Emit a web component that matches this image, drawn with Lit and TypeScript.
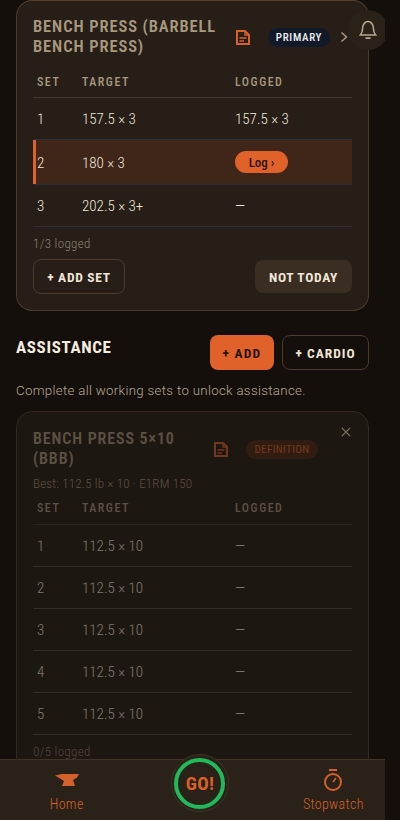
import { LitElement, html, css } from "lit";
import { customElement } from "lit/decorators.js";

const noteIcon = html`<svg class="note" viewBox="0 0 14 15" width="14" height="15" fill="none" stroke="currentColor" stroke-width="2">
  <path d="M1 1h8l4 4v9H1z" /><path d="M3.500 8h7M3.500 11h4.500" stroke-width="1.600" /><path d="M9 1v4h4" stroke-width="1.400" />
</svg>`;

type Row = { n: string; t: string; l: string; cur?: boolean; action?: boolean };

const mainRows: Row[] = [
  { n: "1", t: "157.5 × 3", l: "157.5 × 3" },
  { n: "2", t: "180 × 3", l: "", cur: true, action: true },
  { n: "3", t: "202.5 × 3+", l: "—" },
];
const bbbRows: Row[] = ["1", "2", "3", "4", "5"].map((n) => ({ n, t: "112.5 × 10", l: "—" }));

@customElement("app-root")
export class AppRoot extends LitElement {
  static styles = css`
    :host {
      display: flex;
      width: 400px;
      height: 820px;
      overflow: hidden;
      background: #140f0a;
      font-family: "Roboto", "Liberation Sans", sans-serif;
      font-stretch: 85%;
      color: #f0e6d8;
    }
    .viewport { position: relative; width: 385px; height: 820px; overflow: hidden; flex: none; }
    .page { display: flex; flex-direction: column; padding: 0 16px; }
    .card {
      border: 1px solid #4c3c2a;
      border-radius: 16px;
      background: #261e17;
      padding: 16px;
    }
    .card.first { height: 311px; box-sizing: border-box; padding-top: 6px; border-top-color: #54422e; }
    .head { display: flex; align-items: center; height: 60px; }
    .title {
      width: 203px;
      font-size: 16.5px;
      line-height: 20px;
      font-weight: 600;
      letter-spacing: 0.9px;
      color: #a8997f;
    }
    .note { color: #d9602a; flex: none; margin-right: 1px; }
    .badge {
      margin-left: 17px;
      height: 19px;
      width: 62px;
      border-radius: 10px;
      background: #121a2a;
      color: #eef0f2;
      font-size: 11px;
      font-weight: 500;
      letter-spacing: 0.7px;
      display: flex;
      align-items: center;
      justify-content: center;
      flex: none;
    }
    .chev { margin-left: 10px; flex: none; color: #a8997f; }
    .grid-head, .row {
      display: grid;
      grid-template-columns: 49px 153px 1fr;
      align-items: center;
    }
    .grid-head {
      box-sizing: border-box;
      height: 31px;
      padding-bottom: 1px;
      font-size: 12px;
      font-weight: 500;
      letter-spacing: 1.5px;
      color: #a8997f;
      border-bottom: 1px solid #42362a;
    }
    .grid-head > span:first-child, .row > span:first-child { padding-left: 4px; }
    .row {
      height: 40px;
      padding-top: 1px;
      font-size: 15px;
      font-weight: 300;
      color: #efe7da;
      border-bottom: 1px solid #2f3037;
    }
    .row.cur {
      height: 42px;
      padding-top: 2px;
      background: #402618;
      box-shadow: inset 3px 0 0 #e0622a;
    }
    .log {
      display: flex;
      align-items: center;
      justify-content: center;
      width: 53px;
      height: 22px;
      border-radius: 11px;
      background: #e0622a;
      color: #2a1408;
      font-size: 13px;
      font-weight: 500;
      margin-top: -2px;
    }
    .count { font-size: 13px; font-weight: 300; letter-spacing: .35px; color: #8f8371; margin-top: 9px; line-height: 15px; }
    .actions { display: flex; justify-content: space-between; margin-top: 8px; }
    .btn {
      box-sizing: border-box;
      display: flex;
      align-items: center;
      justify-content: center;
      font-size: 13.5px;
      font-weight: 700;
      font-stretch: 75%;
      letter-spacing: 0.7px;
      border-radius: 8px;
      color: #f0e6d8;
    }
    .outline { border: 1px solid #4c3c2a; }
    .add-set { width: 92px; height: 35px; }
    .not-today { width: 97px; height: 33px; margin-top: 1px; background: #3a2e22; }
    .sec-head { display: flex; align-items: flex-start; margin-top: 24px; }
    .sec-title { font-size: 17px; font-weight: 700; letter-spacing: 0.65px; color: #f4ece0; flex: 1; line-height: 25px; }
    .add { width: 64px; height: 35px; background: #e0622a; color: #2a1408; letter-spacing: 1.2px; }
    .cardio { width: 87px; height: 35px; margin-left: 8px; letter-spacing: 1px; }
    .hint { font-size: 13.3px; font-weight: 300; font-stretch: 90%; letter-spacing: 0.3px; color: #b4a898; margin-top: 13px; line-height: 16px; }
    .card.second {
      position: relative;
      margin-top: 12px;
      background: #1d1711;
      border-color: #33291e;
      padding-bottom: 20px;
    }
    .faded { opacity: 0.45; }
    .head.two { height: 40px; margin-top: 1px; }
    .head.two .title { width: 181px; font-size: 16px; }
    .def {
      width: 72px;
      background: #4a2412;
      color: #e0622a;
      font-size: 11px;
      font-weight: 400;
      letter-spacing: 0.4px;
    }
    .best { font-size: 13px; font-weight: 300; letter-spacing: .2px; color: #a8997f; margin-top: 7px; line-height: 16px; }
    .second .grid-head { height: 33px; padding-bottom: 0; }
    .second .row { border-bottom-color: #4a4a4a; }
    .close { position: absolute; top: 15px; right: 17px; color: #7f7566; }
    .bell {
      position: absolute;
      left: 348px;
      top: 10px;
      width: 40px;
      height: 40px;
      border-radius: 50%;
      background: #2a2219;
      display: flex;
      align-items: center;
      justify-content: center;
      color: #b8a98f;
    }
    .nav {
      position: absolute;
      left: 0;
      width: 400px;
      bottom: 0;
      height: 61px;
      box-sizing: border-box;
      background: #2a2219;
      border-top: 1px solid #3f3325;
      display: grid;
      grid-template-columns: repeat(3, minmax(0, 1fr));
      color: #d4602c;
      font-size: 14px;
      font-weight: 300;
      letter-spacing: 0.35px;
    }
    .tab { display: flex; flex-direction: column; align-items: center; padding-top: 8px; }
    .tab svg { height: 24px; display: block; }
    .tab span { margin-top: 4px; line-height: 16px; }
    .go-wrap { display: flex; justify-content: center; }
    .go-halo {
      margin-top: -6px;
      width: 58px;
      height: 58px;
      box-sizing: border-box;
      border-radius: 50%;
      border: 1px solid #3f3325;
      background: #2a2219;
      display: flex;
      align-items: center;
      justify-content: center;
    }
    .go {
      width: 51px;
      height: 51px;
      box-sizing: border-box;
      border-radius: 50%;
      border: 4px solid #22b85c;
      display: flex;
      align-items: center;
      justify-content: center;
      font-size: 19px;
      font-weight: 700;
      font-stretch: 75%;
      color: #d9602a;
    }
  `;

  private grid(rows: Row[]) {
    return html`
      <div class="grid-head"><span>SET</span><span>TARGET</span><span>LOGGED</span></div>
      ${rows.map(
        (r) => html`<div class="row ${r.cur ? "cur" : ""}">
          <span>${r.n}</span><span>${r.t}</span>
          <span>${r.action ? html`<span class="log">Log ›</span>` : r.l}</span>
        </div>`
      )}
    `;
  }

  render() {
    return html`
      <div class="viewport">
        <div class="page">
          <section class="card first">
            <div class="head">
              <div class="title">BENCH PRESS (BARBELL BENCH PRESS)</div>
              ${noteIcon}
              <div class="badge">PRIMARY</div>
              <svg class="chev" width="8" height="12" viewBox="0 0 8 12" fill="none" stroke="currentColor" stroke-width="1.5"><path d="M1.500 1.500 6.500 6l-5 4.500" /></svg>
            </div>
            ${this.grid(mainRows)}
            <div class="count">1/3 logged</div>
            <div class="actions">
              <div class="btn outline add-set">+ ADD SET</div>
              <div class="btn not-today">NOT TODAY</div>
            </div>
          </section>

          <div class="sec-head">
            <div class="sec-title">ASSISTANCE</div>
            <div class="btn add">+ ADD</div>
            <div class="btn outline cardio">+ CARDIO</div>
          </div>
          <div class="hint">Complete all working sets to unlock assistance.</div>

          <section class="card second">
            <svg class="close" width="10" height="10" viewBox="0 0 11 11" stroke="currentColor" stroke-width="1.4"><path d="M1 1l9 9M10 1l-9 9" /></svg>
            <div class="faded">
              <div class="head two">
                <div class="title">BENCH PRESS 5×10 (BBB)</div>
                ${noteIcon}
                <div class="badge def">DEFINITION</div>
              </div>
              <div class="best">Best: 112.5 lb × 10 · E1RM 150</div>
              ${this.grid(bbbRows)}
              <div class="count">0/5 logged</div>
            </div>
          </section>
        </div>

        <div class="bell">
          <svg width="18" height="22" viewBox="0 0 20 24" fill="none" stroke="currentColor" stroke-width="1.700">
            <path d="M1.500 17.500h17c-2-2-2.500-3.500-2.500-7.500C16 6 13.500 2.500 10 2.500S4 6 4 10c0 4-.5 5.500-2.500 7.500z" />
            <path d="M8 21h4" stroke-width="2" stroke-linecap="round" />
          </svg>
        </div>

        <nav class="nav">
          <div class="tab">
            <svg width="26" height="24" viewBox="0 0 26 24"><path fill="currentColor" d="M1 7.500 8 6h17l-2 3.500-4 2.500 2 6H8l2-5z" /></svg>
            <span>Home</span>
          </div>
          <div class="go-wrap"><div class="go-halo"><div class="go">GO!</div></div></div>
          <div class="tab">
            <svg width="20" height="24" viewBox="0 0 20 24" fill="none" stroke="currentColor" stroke-width="2"><path d="M6 2h8" /><circle cx="10" cy="14" r="8" /><path d="M10 14l3-4" stroke-width="1.500" /></svg>
            <span>Stopwatch</span>
          </div>
        </nav>
      </div>
    `;
  }
}
